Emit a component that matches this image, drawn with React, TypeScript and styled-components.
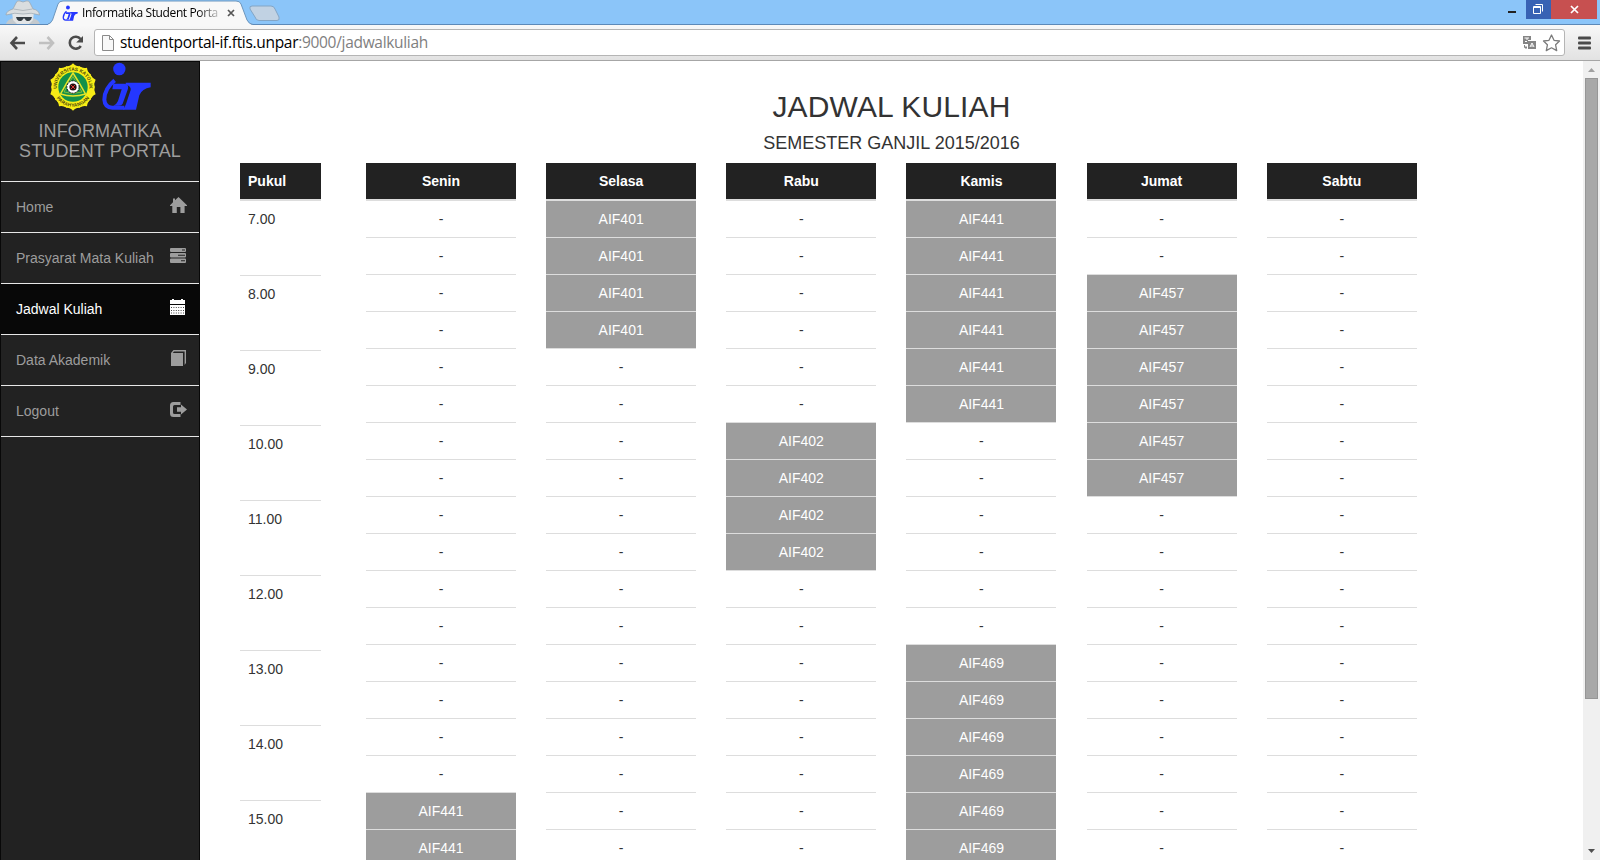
import React from "react";
import styled, { createGlobalStyle } from "styled-components";

const Global = createGlobalStyle`
  * { box-sizing: border-box; }
  html, body, #root { margin: 0; height: 100%; overflow: hidden; }
  body { background: #fff; font-family: "Liberation Sans", Arial, sans-serif; font-size: 14px; line-height: 20px; color: #333; }
  svg { display: block; }
`;

const Window = styled.div`
  width: 1600px;
  height: 860px;
  display: flex;
  flex-direction: column;
  overflow: hidden;
`;

const TabStrip = styled.header`
  height: 25px;
  flex: none;
  display: flex;
  align-items: flex-start;
  background: #8bc5f9;
  border-bottom: 1px solid #5c89b8;
`;

const Incognito = styled.div`
  width: 48px;
  padding: 0 0 0 5px;
`;

const Tab = styled.div`
  position: relative;
  width: 203px;
  height: 25px;
  display: flex;
  align-items: center;
  padding: 1px 0 0 14px;
`;

const TabShape = styled.svg`
  position: absolute;
  left: 0;
  top: 0;
`;

const TabTitle = styled.span`
  position: relative;
  width: 137px;
  margin-left: 4px;
  white-space: nowrap;
  font: 12px/18px "Open Sans", "Noto Sans", sans-serif;
  letter-spacing: -0.38px;
  color: #000;
  mask-image: linear-gradient(90deg, #000 116px, transparent 142px);
`;

const Above = styled.span`
  position: relative;
  display: block;
`;

const TabClose = styled(Above)`
  margin-left: 8px;
`;

const WindowButtons = styled.div`
  margin-left: auto;
  margin-right: 3px;
  display: flex;
`;

const WindowButton = styled.div<{ $width: number; $bg?: string }>`
  width: ${(p) => p.$width}px;
  height: 19px;
  background: ${(p) => p.$bg ?? "transparent"};
`;

const Toolbar = styled.div`
  height: 36px;
  flex: none;
  display: flex;
  align-items: center;
  padding: 0 7px 0 9px;
  background: linear-gradient(#f8f8f8, #e2e2e2);
  border-bottom: 1px solid #a6a6a6;
`;

const NavIcons = styled.div`
  display: flex;
  width: 85px;
`;

const Address = styled.div`
  width: 1471px;
  height: 27px;
  display: flex;
  align-items: center;
  padding: 0 3px 0 7px;
  background: #fff;
  border: 1px solid #b5b5b5;
  border-radius: 3px;
`;

const Url = styled.span`
  flex: 1;
  margin-left: 6px;
  padding-bottom: 2px;
  font: 15.5px/22px "Open Sans", "Noto Sans", sans-serif;
  letter-spacing: -0.31px;
  white-space: nowrap;
  color: #000;
`;

const UrlPath = styled.span`
  color: #808080;
`;

const MenuIcon = styled.div`
  margin-left: 13px;
`;

const Page = styled.div`
  flex: 1;
  min-height: 0;
  display: flex;
`;

const Sidebar = styled.nav`
  width: 200px;
  flex: none;
  background: #222;
  border: 1px solid #080808;
  border-bottom: 0;
`;

const Brand = styled.div`
  height: 120px;
  border-bottom: 1px solid #e7e7e7;
  text-align: center;
  font-size: 18px;
  line-height: 20px;
  letter-spacing: 0.13px;
  color: #9d9d9d;
`;

const Logos = styled.div`
  display: flex;
  justify-content: center;
  gap: 4px;
  height: 59px;
`;

const MenuItem = styled.a<{ $active?: boolean }>`
  display: flex;
  justify-content: space-between;
  height: 51px;
  padding: 15px 12px 0 15px;
  border-bottom: 1px solid #e7e7e7;
  background: ${(p) => (p.$active ? "#080808" : "transparent")};
  color: ${(p) => (p.$active ? "#fff" : "#9d9d9d")};
`;

const Main = styled.main`
  flex: 1;
  min-width: 0;
  overflow: hidden;
  padding: 29px 0 0 40px;
`;

const Titles = styled.div`
  width: 1303px;
  text-align: center;
  margin-bottom: 10px;
`;

const Title = styled.h1`
  margin: 0;
  font-size: 30px;
  line-height: 34px;
  font-weight: 400;
  letter-spacing: 0.15px;
`;

const Subtitle = styled.h2`
  margin: 9px 0 0;
  font-size: 18px;
  line-height: 20px;
  font-weight: 400;
`;

const Schedule = styled.div`
  display: flex;
  gap: 30.16px;
`;

const HourColumn = styled.div`
  width: 81px;
  margin-right: 14.84px;
`;

const DayColumn = styled.div`
  width: 150px;
  text-align: center;
`;

const HeadCell = styled.div`
  height: 38px;
  padding: 8px;
  background: #222;
  border-bottom: 2px solid #ddd;
  color: #fff;
  font-weight: 700;
`;

const HourCell = styled.div`
  height: 75px;
  padding: 8px;
  border-bottom: 1px solid #ddd;
`;

const SlotCell = styled.div<{ $busy: boolean }>`
  height: 37px;
  padding: 8px;
  border-bottom: 1px solid #ddd;
  background: ${(p) => (p.$busy ? "#9d9d9d" : "#fff")};
  color: ${(p) => (p.$busy ? "#fff" : "#333")};
`;

const ScrollBar = styled.div`
  width: 17px;
  flex: none;
  display: flex;
  flex-direction: column;
  align-items: center;
  background: #f0f0f0;
`;

const Thumb = styled.div`
  width: 13px;
  height: 621px;
  margin: 6px 0 auto;
  background: #a8a8a8;
  border: 1px solid #969696;
`;

const ScrollArrow = styled.svg`
  margin: 7px 0 0;
  &:last-child { margin: 0 0 7px; }
`;

const MonogramShape = () => (
  <g fill="#2437ff">
    <ellipse cx="221" cy="33" rx="18.5" ry="19" />
    <path d="M207 67C186 84 176 105 176 125C177 142 186 149 200 149H236" fill="none" stroke="#2437ff" strokeWidth="12" />
    <path d="M203 77H236Q250 78 247 92L231 137Q228 143 220 143H203Q213 139 217 129L228 94H200Z" />
    <path d="M240 74H315V88Q289 92 281 112L271 155H232Q238 146 241 138L255 96Q257 84 240 80Z" />
  </g>
);

const Monogram = () => (
  <svg width="50" height="52" viewBox="166 12 150 156">
    <MonogramShape />
  </svg>
);

const petals = Array.from({ length: 10 }, (_, i) => 180 + i * 36);

const Emblem = () => (
  <svg width="48" height="50" viewBox="-24 -25 48 50">
    <g fill="#f8ed16">
      {petals.map((a) => (
        <path key={a} d="M-7.2-20.5Q-3-20.5 0-23.8Q3-20.5 7.2-20.5L0 0Z" transform={`rotate(${a})`} />
      ))}
      <circle r="21.3" />
    </g>
    <circle r="14.7" fill="#13904a" />
    <path d="M0-14Q6-5 12.5 7Q0 11-12.5 7Q-6-5 0-14Z" fill="none" stroke="#e4e42a" strokeWidth="1.5" />
    <path d="M0-10.5Q4-3 9 5Q0 8-9 5Q-5-3 0-10.5Z" fill="none" stroke="#a9cc34" strokeWidth="0.7" />
    <circle r="6.2" fill="#fff" stroke="#111" strokeWidth="1" strokeDasharray="2 1" />
    <circle r="3.6" fill="#241010" />
    <path d="M-2-2L2 2M2-2L-2 2" stroke="#d33" strokeWidth="1" />
    <path id="arcTop" d="M-15.8 4A16.3 16.3 0 1 1 15.8 4" fill="none" />
    <path id="arcBottom" d="M-18.5 7A19.8 19.8 0 0 0 18.5 7" fill="none" />
    <g fontFamily="Liberation Sans, sans-serif" fontSize="4.8" fontWeight="700" fill="#4a470c" textAnchor="middle">
      <text><textPath href="#arcTop" startOffset="50%" textLength="54">UNIVERSITAS KATOLIK</textPath></text>
      <text><textPath href="#arcBottom" startOffset="50%" textLength="39">PARAHYANGAN</textPath></text>
    </g>
  </svg>
);

const icons: Record<string, React.ReactNode> = {
  home: <path d="M8.5 0L17 8.2V9H14.6V16H10.4V10H6.8V16H2.3V9H0V8.2L3 5.2V1.5H5V3.3Z" />,
  tasks: (
    <path fillRule="evenodd" d="M1 0H15Q16 0 16 1V3Q16 4 15 4H1Q0 4 0 3V1Q0 0 1 0ZM12 1.5V2.5H15V1.5ZM1 5H15Q16 5 16 6V8.5Q16 9.5 15 9.5H1Q0 9.5 0 8.5V6Q0 5 1 5ZM8 6.8V7.8H15V6.8ZM1 10.5H15Q16 10.5 16 11.5V14Q16 15 15 15H1Q0 15 0 14V11.5Q0 10.5 1 10.5ZM11 12.3V13.3H15V12.3Z" />
  ),
  calendar: (
    <>
      <path d="M0 1H2V0H4V1H11V0H13V1H15V5H0Z" />
      <path d="M0 6H15V16H0Z" />
      <path d="M1 8.5H14M1 11.5H14M1 14H14" stroke="#080808" strokeWidth="1" strokeDasharray="1 1.4" opacity="0.75" />
    </>
  ),
  book: <path d="M1 3L3.5 0H16V13L14.6 15V1.5H4L2.8 3H13V16H1Z" />,
  logout: (
    <path d="M10.5 0V3H4.5Q3 3 3 4.5V10.5Q3 12 4.5 12H10.5V15H3.5Q0 15 0 11.5V3.5Q0 0 3.5 0ZM11 2.5L17 7.5L11 12.5V9.7H7V5.3H11Z" transform="translate(0 1)" />
  ),
};

const menu = [
  { label: "Home", icon: "home" },
  { label: "Prasyarat Mata Kuliah", icon: "tasks" },
  { label: "Jadwal Kuliah", icon: "calendar", active: true },
  { label: "Data Akademik", icon: "book" },
  { label: "Logout", icon: "logout" },
];

const hours = ["7.00", "8.00", "9.00", "10.00", "11.00", "12.00", "13.00", "14.00", "15.00"];

type Booking = { from: number; to: number; code: string };

const days: { name: string; bookings: Booking[] }[] = [
  { name: "Senin", bookings: [{ from: 16, to: 18, code: "AIF441" }] },
  { name: "Selasa", bookings: [{ from: 0, to: 4, code: "AIF401" }] },
  { name: "Rabu", bookings: [{ from: 6, to: 10, code: "AIF402" }] },
  { name: "Kamis", bookings: [{ from: 0, to: 6, code: "AIF441" }, { from: 12, to: 18, code: "AIF469" }] },
  { name: "Jumat", bookings: [{ from: 2, to: 8, code: "AIF457" }] },
  { name: "Sabtu", bookings: [] },
];

const slots = Array.from({ length: 18 }, (_, i) => i);

const Day = ({ name, bookings }: { name: string; bookings: Booking[] }) => (
  <DayColumn>
    <HeadCell>{name}</HeadCell>
    {slots.map((s) => {
      const hit = bookings.find((b) => s >= b.from && s < b.to);
      return (
        <SlotCell key={s} $busy={!!hit}>
          {hit ? hit.code : "-"}
        </SlotCell>
      );
    })}
  </DayColumn>
);

const BrowserTabs = () => (
  <TabStrip>
    <Incognito>
      <svg width="36" height="24" viewBox="0 0 36 24">
        <path d="M1 24Q2 20 8 18L28 18Q34 20 35 24Z" fill="#c3c9cd" />
        <path d="M7 12H29L28 20L24 24H12L8 20Z" fill="#e2e5e7" />
        <path d="M8 9L11 3Q12 0 15 1Q18 3 21 1Q24 0 25 3L28 9Q34 10 34.500 15Q26 12 18 14Q10 12 1 15Q1 11 8 9Z" fill="#d9dddf" stroke="#9aa5ad" strokeWidth="0.7" />
        <path d="M8.500 9Q18 12 27.500 9" stroke="#b1b8bd" fill="none" />
        <path d="M11 17H27L26 19.500Q24 22 21 20.500L19.500 18.500H18.500L17 20.500Q14 22 12 19.500Z" fill="#343c42" />
      </svg>
    </Incognito>
    <Tab>
      <TabShape width="240" height="26" viewBox="0 0 240 26">
        <path d="M-2 25Q3 24.5 4.5 20L10 4Q11 1 15 1H188Q192 1 193 4L199 20Q201 24.5 205 25V26H-2Z" fill="#f8f8f8" />
        <path d="M-2 24.5Q3 24 4.5 20L10 4Q11 1 15 1H188Q192 1 193 4L199 20Q201 24 205 24.5" fill="none" stroke="#6d96bd" />
        <path d="M204 6H223Q226 6 227 9L231 17Q232 20.5 229 20.5H211Q208 20.5 207 17L202 9Q201 6 204 6Z" fill="#c1d2e3" stroke="#83a5c5" />
      </TabShape>
      <Above>
        <svg width="16" height="16" viewBox="164 10 154 148" preserveAspectRatio="none">
          <MonogramShape />
        </svg>
      </Above>
      <TabTitle>Informatika Student Porta</TabTitle>
      <TabClose>
        <svg width="8" height="8" viewBox="0 0 8 8" stroke="#555" strokeWidth="1.7">
          <path d="M1 1L7 7M7 1L1 7" />
        </svg>
      </TabClose>
    </Tab>
    <WindowButtons>
      <WindowButton $width={29}>
        <svg width="29" height="19"><path d="M11 11H19V13H11Z" fill="#222" /></svg>
      </WindowButton>
      <WindowButton $width={25} $bg="#3862b4">
        <svg width="25" height="19" fill="none" stroke="#fff">
          <path d="M7.5 6.5H14.5V13.5H7.5ZM7 7.5H15M9.5 4.5H16.5V11.5" />
        </svg>
      </WindowButton>
      <WindowButton $width={46} $bg="#c75050">
        <svg width="46" height="19" fill="none" stroke="#fff" strokeWidth="1.7">
          <path d="M20 6L27 13M27 6L20 13" />
        </svg>
      </WindowButton>
    </WindowButtons>
  </TabStrip>
);

const BrowserToolbar = () => (
  <Toolbar>
    <NavIcons>
      <svg width="76" height="18" viewBox="0 0 76 18" fill="none" strokeWidth="2.6">
        <path d="M8 3L2.5 9L8 15M2.5 9H16" stroke="#4b4b4b" />
        <path d="M38.5 3L44 9L38.5 15M44 9H30" stroke="#c0c0c0" />
        <path d="M71.5 5A6 6 0 1 0 71.8 12" stroke="#4b4b4b" />
        <path d="M74 2V8.5H67.2Z" fill="#4b4b4b" />
      </svg>
    </NavIcons>
    <Address>
      <svg width="12" height="16" viewBox="0 0 12 16" fill="#f8f8f8" stroke="#8a8a8a">
        <path d="M0.5 0.5H7.5L11.5 4.5V15.5H0.5ZM7.5 0.5V4.5H11.5" />
      </svg>
      <Url>
        studentportal-if.ftis.unpar<UrlPath>:9000/jadwalkuliah</UrlPath>
      </Url>
      <svg width="38" height="18" viewBox="0 0 38 18">
        <path d="M0 2H8V6H5V10H0Z" fill="#858585" />
        <path d="M1.5 4H6M4 4V6M2 7.5H4" stroke="#fff" fill="none" />
        <rect x="5" y="7" width="8" height="8" fill="#858585" />
        <path d="M7 13L9 9L11 13M8 12H10" stroke="#fff" fill="none" />
        <path d="M1.5 11V13.5H4M3 12V15" stroke="#858585" fill="none" />
        <path d="M28.5 1L31 6.3L36.5 7L32.6 10.8L33.7 16.6L28.5 13.8L23.3 16.6L24.4 10.8L20.5 7L26 6.3Z" fill="#fff" stroke="#7b7b7b" strokeWidth="1.3" strokeLinejoin="round" />
      </svg>
    </Address>
    <MenuIcon>
      <svg width="13" height="14" viewBox="0 0 13 14" fill="#4a4a4a">
        <rect width="13" height="3" y="0.5" rx="1" />
        <rect width="13" height="3" y="5.5" rx="1" />
        <rect width="13" height="3" y="10.5" rx="1" />
      </svg>
    </MenuIcon>
  </Toolbar>
);

export default function App() {
  return (
    <Window>
      <Global />
      <BrowserTabs />
      <BrowserToolbar />
      <Page>
        <Sidebar>
          <Brand>
            <Logos>
              <Emblem />
              <Monogram />
            </Logos>
            INFORMATIKA
            <br />
            STUDENT PORTAL
          </Brand>
          {menu.map((m) => (
            <MenuItem key={m.label} $active={m.active}>
              <span>{m.label}</span>
              <svg width="17" height="17" viewBox="0 0 17 17" fill="currentColor">
                {icons[m.icon]}
              </svg>
            </MenuItem>
          ))}
        </Sidebar>
        <Main>
          <Titles>
            <Title>JADWAL KULIAH</Title>
            <Subtitle>SEMESTER GANJIL 2015/2016</Subtitle>
          </Titles>
          <Schedule>
            <HourColumn>
              <HeadCell>Pukul</HeadCell>
              {hours.map((h) => (
                <HourCell key={h}>{h}</HourCell>
              ))}
            </HourColumn>
            {days.map((d) => (
              <Day key={d.name} {...d} />
            ))}
          </Schedule>
        </Main>
        <ScrollBar>
          <ScrollArrow width="7" height="4"><path d="M0 4L3.5 0L7 4Z" fill="#a0a0a0" /></ScrollArrow>
          <Thumb />
          <ScrollArrow width="7" height="4"><path d="M0 0H7L3.5 4Z" fill="#505050" /></ScrollArrow>
        </ScrollBar>
      </Page>
    </Window>
  );
}
